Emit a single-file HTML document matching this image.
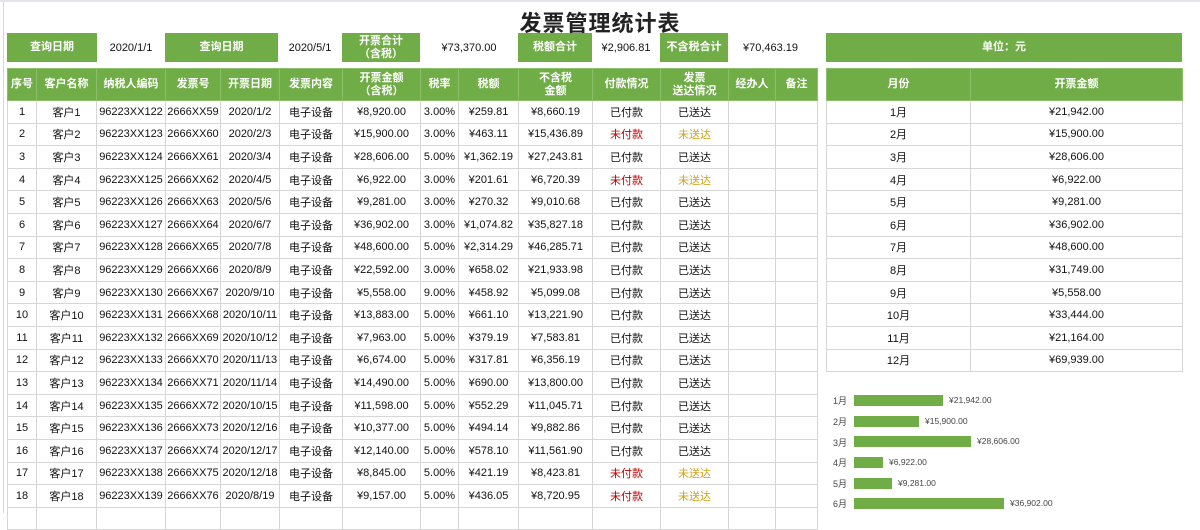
<!DOCTYPE html>
<html><head><meta charset="utf-8"><style>
*{margin:0;padding:0;box-sizing:border-box}
body{width:1200px;height:513px;overflow:hidden;background:#fff;font-family:"Liberation Sans","Noto Sans CJK SC",sans-serif;font-size:11px;color:#111;position:relative}
.g{position:absolute;background:#70ad47;color:#fff;font-weight:bold;display:flex;align-items:center;justify-content:center;text-align:center;line-height:13px;font-size:11px}
.t{position:absolute;display:flex;align-items:center;justify-content:center;height:29px;top:33px;font-size:11px}
table{position:absolute;border-collapse:collapse;table-layout:fixed}
td,th{border:1px solid #d6d6d6;text-align:center;white-space:nowrap;overflow:hidden;font-weight:normal;padding:0}
th{background:#70ad47;color:#fff;font-weight:bold;border-color:#8cbf6a;line-height:13px;height:32px}
td{height:22.6px}
.r{color:#c00000}.o{color:#d4a017}
.bar{position:absolute;left:854px;height:11px;background:#70ad47}
.bl{position:absolute;left:833px;font-size:9px;color:#444}
.bv{position:absolute;font-size:8.5px;color:#444}
</style></head><body>
<div style="position:absolute;left:3px;top:0;width:1px;height:513px;background:#d8d8d8"></div>
<div style="position:absolute;left:0;top:0;width:1200px;height:2px;background:#e4e4ea"></div>
<div style="position:absolute;left:0;top:6px;width:1200px;text-align:center;font-size:22px;font-weight:bold;color:#222;letter-spacing:1px">发票管理统计表</div>

<div class="g" style="left:7px;top:33px;width:90px;height:29px">查询日期</div>
<div class="t" style="left:97px;width:68px">2020/1/1</div>
<div class="g" style="left:165px;top:33px;width:113px;height:29px">查询日期</div>
<div class="t" style="left:278px;width:64px">2020/5/1</div>
<div class="g" style="left:342px;top:33px;width:78px;height:29px">开票合计<br>（含税）</div>
<div class="t" style="left:420px;width:98px">¥73,370.00</div>
<div class="g" style="left:518px;top:33px;width:74px;height:29px">税额合计</div>
<div class="t" style="left:592px;width:68px">¥2,906.81</div>
<div class="g" style="left:660px;top:33px;width:68px;height:29px">不含税合计</div>
<div class="t" style="left:728px;width:85px">¥70,463.19</div>
<div class="g" style="left:826px;top:33px;width:356px;height:29px">单位：元</div>

<table style="left:7px;top:68px;width:810px;border:1px solid #bbb">
<colgroup><col style="width:29px"><col style="width:60px"><col style="width:69px"><col style="width:55px"><col style="width:59px"><col style="width:63px"><col style="width:78px"><col style="width:38px"><col style="width:60px"><col style="width:74px"><col style="width:68px"><col style="width:68px"><col style="width:47px"><col style="width:42px"></colgroup>
<tr><th>序号</th><th>客户名称</th><th>纳税人编码</th><th>发票号</th><th>开票日期</th><th>发票内容</th><th>开票金额<br>（含税）</th><th>税率</th><th>税额</th><th>不含税<br>金额</th><th>付款情况</th><th>发票<br>送达情况</th><th>经办人</th><th>备注</th></tr>
<tr><td>1</td><td>客户1</td><td>96223XX122</td><td>2666XX59</td><td>2020/1/2</td><td>电子设备</td><td>¥8,920.00</td><td>3.00%</td><td>¥259.81</td><td>¥8,660.19</td><td>已付款</td><td>已送达</td><td></td><td></td></tr>
<tr><td>2</td><td>客户2</td><td>96223XX123</td><td>2666XX60</td><td>2020/2/3</td><td>电子设备</td><td>¥15,900.00</td><td>3.00%</td><td>¥463.11</td><td>¥15,436.89</td><td class="r">未付款</td><td class="o">未送达</td><td></td><td></td></tr>
<tr><td>3</td><td>客户3</td><td>96223XX124</td><td>2666XX61</td><td>2020/3/4</td><td>电子设备</td><td>¥28,606.00</td><td>5.00%</td><td>¥1,362.19</td><td>¥27,243.81</td><td>已付款</td><td>已送达</td><td></td><td></td></tr>
<tr><td>4</td><td>客户4</td><td>96223XX125</td><td>2666XX62</td><td>2020/4/5</td><td>电子设备</td><td>¥6,922.00</td><td>3.00%</td><td>¥201.61</td><td>¥6,720.39</td><td class="r">未付款</td><td class="o">未送达</td><td></td><td></td></tr>
<tr><td>5</td><td>客户5</td><td>96223XX126</td><td>2666XX63</td><td>2020/5/6</td><td>电子设备</td><td>¥9,281.00</td><td>3.00%</td><td>¥270.32</td><td>¥9,010.68</td><td>已付款</td><td>已送达</td><td></td><td></td></tr>
<tr><td>6</td><td>客户6</td><td>96223XX127</td><td>2666XX64</td><td>2020/6/7</td><td>电子设备</td><td>¥36,902.00</td><td>3.00%</td><td>¥1,074.82</td><td>¥35,827.18</td><td>已付款</td><td>已送达</td><td></td><td></td></tr>
<tr><td>7</td><td>客户7</td><td>96223XX128</td><td>2666XX65</td><td>2020/7/8</td><td>电子设备</td><td>¥48,600.00</td><td>5.00%</td><td>¥2,314.29</td><td>¥46,285.71</td><td>已付款</td><td>已送达</td><td></td><td></td></tr>
<tr><td>8</td><td>客户8</td><td>96223XX129</td><td>2666XX66</td><td>2020/8/9</td><td>电子设备</td><td>¥22,592.00</td><td>3.00%</td><td>¥658.02</td><td>¥21,933.98</td><td>已付款</td><td>已送达</td><td></td><td></td></tr>
<tr><td>9</td><td>客户9</td><td>96223XX130</td><td>2666XX67</td><td>2020/9/10</td><td>电子设备</td><td>¥5,558.00</td><td>9.00%</td><td>¥458.92</td><td>¥5,099.08</td><td>已付款</td><td>已送达</td><td></td><td></td></tr>
<tr><td>10</td><td>客户10</td><td>96223XX131</td><td>2666XX68</td><td>2020/10/11</td><td>电子设备</td><td>¥13,883.00</td><td>5.00%</td><td>¥661.10</td><td>¥13,221.90</td><td>已付款</td><td>已送达</td><td></td><td></td></tr>
<tr><td>11</td><td>客户11</td><td>96223XX132</td><td>2666XX69</td><td>2020/10/12</td><td>电子设备</td><td>¥7,963.00</td><td>5.00%</td><td>¥379.19</td><td>¥7,583.81</td><td>已付款</td><td>已送达</td><td></td><td></td></tr>
<tr><td>12</td><td>客户12</td><td>96223XX133</td><td>2666XX70</td><td>2020/11/13</td><td>电子设备</td><td>¥6,674.00</td><td>5.00%</td><td>¥317.81</td><td>¥6,356.19</td><td>已付款</td><td>已送达</td><td></td><td></td></tr>
<tr><td>13</td><td>客户13</td><td>96223XX134</td><td>2666XX71</td><td>2020/11/14</td><td>电子设备</td><td>¥14,490.00</td><td>5.00%</td><td>¥690.00</td><td>¥13,800.00</td><td>已付款</td><td>已送达</td><td></td><td></td></tr>
<tr><td>14</td><td>客户14</td><td>96223XX135</td><td>2666XX72</td><td>2020/10/15</td><td>电子设备</td><td>¥11,598.00</td><td>5.00%</td><td>¥552.29</td><td>¥11,045.71</td><td>已付款</td><td>已送达</td><td></td><td></td></tr>
<tr><td>15</td><td>客户15</td><td>96223XX136</td><td>2666XX73</td><td>2020/12/16</td><td>电子设备</td><td>¥10,377.00</td><td>5.00%</td><td>¥494.14</td><td>¥9,882.86</td><td>已付款</td><td>已送达</td><td></td><td></td></tr>
<tr><td>16</td><td>客户16</td><td>96223XX137</td><td>2666XX74</td><td>2020/12/17</td><td>电子设备</td><td>¥12,140.00</td><td>5.00%</td><td>¥578.10</td><td>¥11,561.90</td><td>已付款</td><td>已送达</td><td></td><td></td></tr>
<tr><td>17</td><td>客户17</td><td>96223XX138</td><td>2666XX75</td><td>2020/12/18</td><td>电子设备</td><td>¥8,845.00</td><td>5.00%</td><td>¥421.19</td><td>¥8,423.81</td><td class="r">未付款</td><td class="o">未送达</td><td></td><td></td></tr>
<tr><td>18</td><td>客户18</td><td>96223XX139</td><td>2666XX76</td><td>2020/8/19</td><td>电子设备</td><td>¥9,157.00</td><td>5.00%</td><td>¥436.05</td><td>¥8,720.95</td><td class="r">未付款</td><td class="o">未送达</td><td></td><td></td></tr>
<tr><td></td><td></td><td></td><td></td><td></td><td></td><td></td><td></td><td></td><td></td><td></td><td></td><td></td><td></td></tr>
</table>

<table style="left:826px;top:68px;width:356px;border:1px solid #bbb">
<colgroup><col style="width:144px"><col style="width:212px"></colgroup>
<tr><th>月份</th><th>开票金额</th></tr>
<tr><td>1月</td><td>¥21,942.00</td></tr>
<tr><td>2月</td><td>¥15,900.00</td></tr>
<tr><td>3月</td><td>¥28,606.00</td></tr>
<tr><td>4月</td><td>¥6,922.00</td></tr>
<tr><td>5月</td><td>¥9,281.00</td></tr>
<tr><td>6月</td><td>¥36,902.00</td></tr>
<tr><td>7月</td><td>¥48,600.00</td></tr>
<tr><td>8月</td><td>¥31,749.00</td></tr>
<tr><td>9月</td><td>¥5,558.00</td></tr>
<tr><td>10月</td><td>¥33,444.00</td></tr>
<tr><td>11月</td><td>¥21,164.00</td></tr>
<tr><td>12月</td><td>¥69,939.00</td></tr>
</table>

<div class="bl" style="top:394px">1月</div><div class="bar" style="top:395px;width:89px"></div><div class="bv" style="left:949px;top:395px">¥21,942.00</div>
<div class="bl" style="top:415px">2月</div><div class="bar" style="top:416px;width:65px"></div><div class="bv" style="left:925px;top:416px">¥15,900.00</div>
<div class="bl" style="top:436px">3月</div><div class="bar" style="top:436px;width:117px"></div><div class="bv" style="left:977px;top:436px">¥28,606.00</div>
<div class="bl" style="top:456px">4月</div><div class="bar" style="top:457px;width:29px"></div><div class="bv" style="left:889px;top:457px">¥6,922.00</div>
<div class="bl" style="top:477px">5月</div><div class="bar" style="top:478px;width:38px"></div><div class="bv" style="left:898px;top:478px">¥9,281.00</div>
<div class="bl" style="top:497px">6月</div><div class="bar" style="top:498px;width:150px"></div><div class="bv" style="left:1010px;top:498px">¥36,902.00</div>
</body></html>
